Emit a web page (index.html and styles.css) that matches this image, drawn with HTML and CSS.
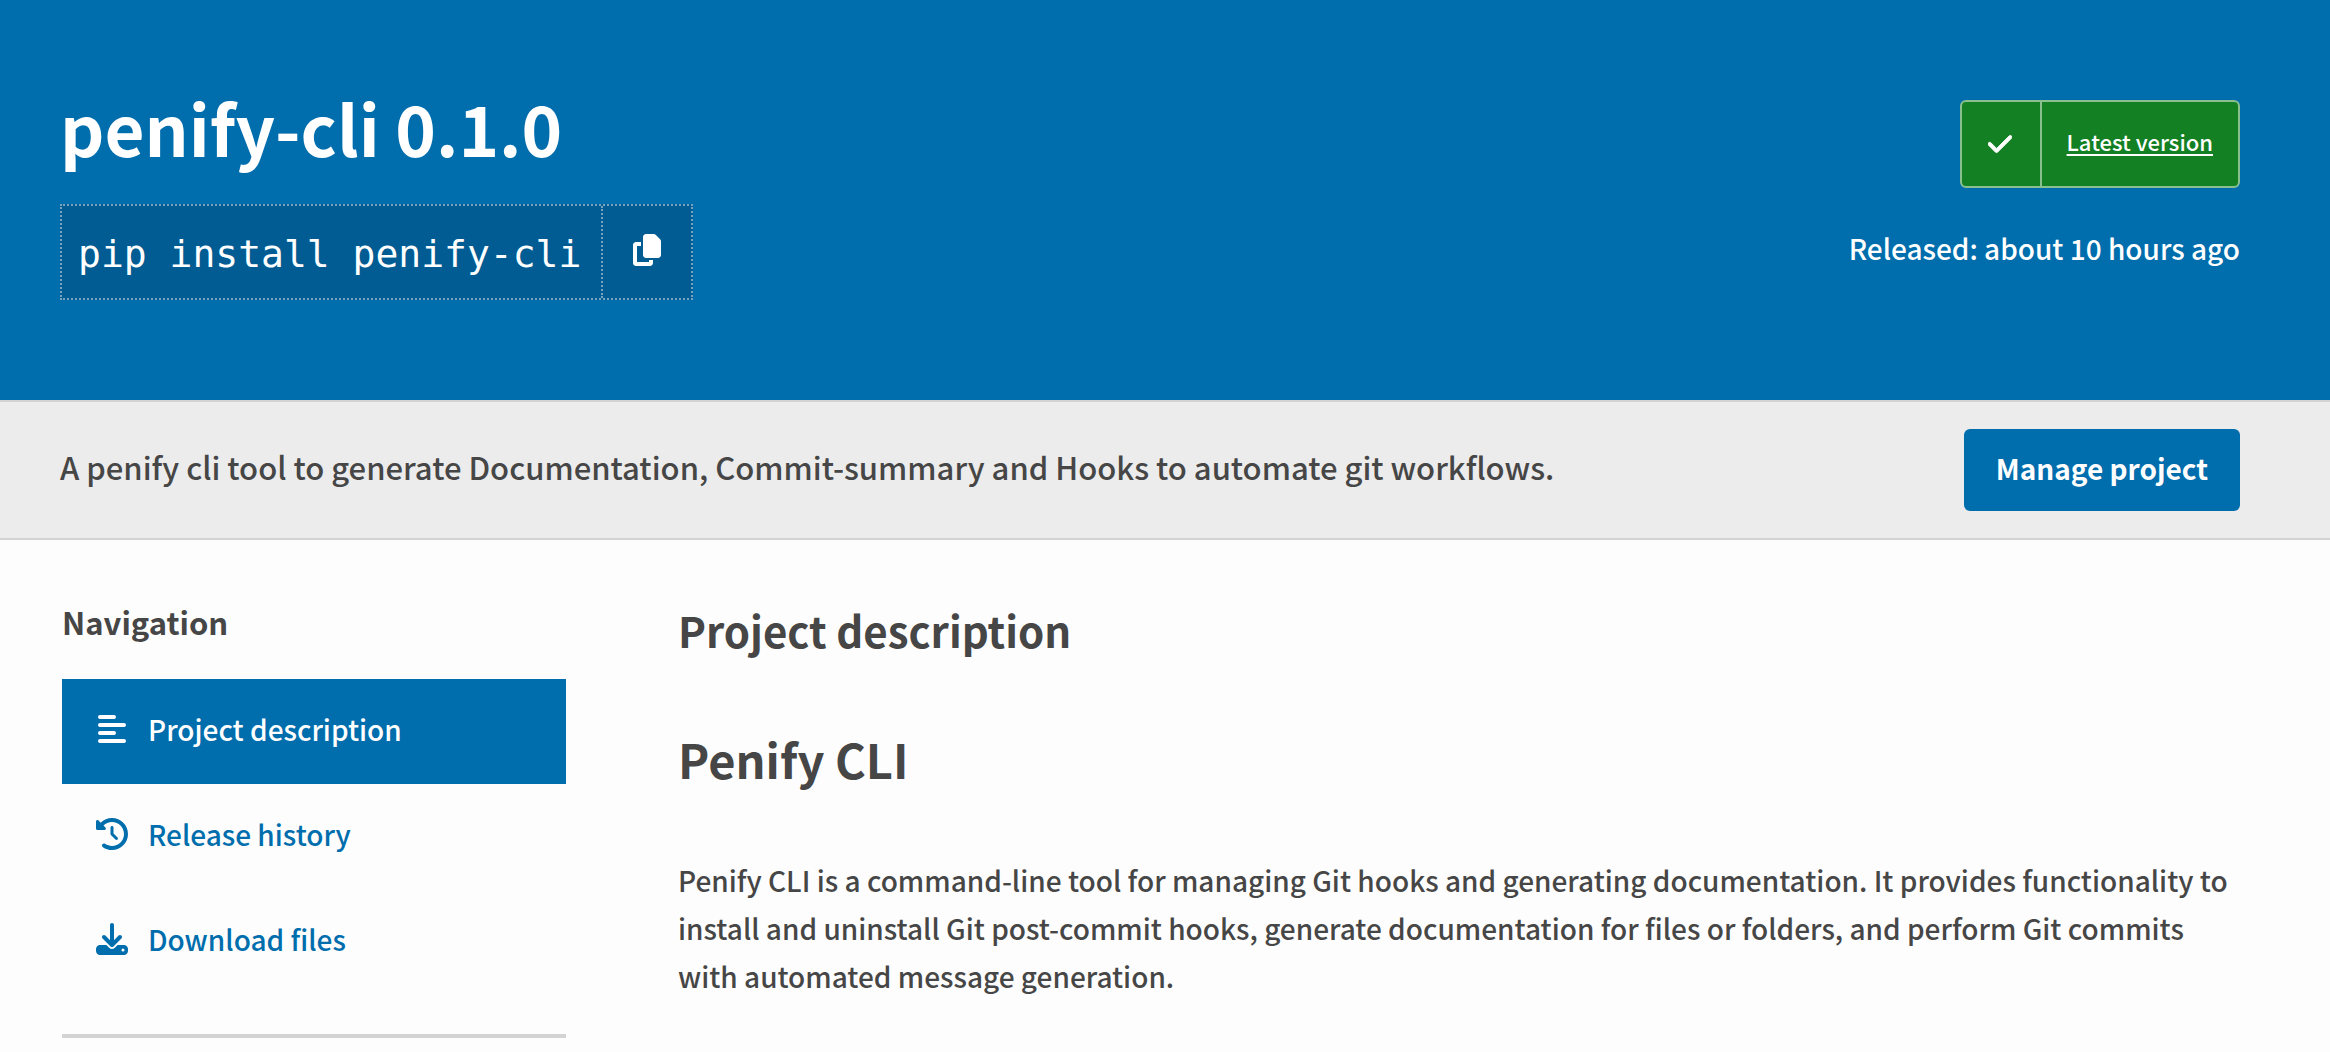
FILE: index.html
```html
<!DOCTYPE html>
<html lang="en">
<head>
<meta charset="utf-8">
<meta name="viewport" content="width=device-width, initial-scale=1">
<title>penify-cli · PyPI</title>
<link rel="stylesheet" href="styles.css">
</head>
<body>
<header class="package-header">
  <div class="package-header-left">
    <h1 class="package-name">penify-cli 0.1.0</h1>
    <div class="pip-command">
      <span class="pip-text">pip install penify-cli</span>
      <button class="copy-button" type="button" aria-label="Copy PIP instructions">
        <svg class="copy-icon" viewBox="0 0 448 512" aria-hidden="true"><path d="M208 0H332.100c12.700 0 24.900 5.100 33.900 14.100l67.900 67.900c9 9 14.100 21.200 14.100 33.900V336c0 26.500-21.500 48-48 48H208c-26.500 0-48-21.500-48-48V48c0-26.500 21.500-48 48-48zM48 128h80v64H64V448H256V416h64v48c0 26.500-21.500 48-48 48H48c-26.500 0-48-21.500-48-48V176c0-26.500 21.500-48 48-48z"/></svg>
      </button>
    </div>
  </div>
  <div class="package-header-right">
    <div class="status-badge">
      <span class="status-icon"><svg viewBox="0 0 448 512" aria-hidden="true"><path d="M438.600 105.400c12.500 12.500 12.500 32.800 0 45.300l-256 256c-12.500 12.500-32.800 12.500-45.300 0l-128-128c-12.500-12.500-12.500-32.800 0-45.300s32.800-12.500 45.300 0L160 338.700 393.400 105.400c12.500-12.500 32.800-12.500 45.300 0z"/></svg></span>
      <a class="status-link" href="#">Latest version</a>
    </div>
    <p class="release-date">Released: about 10 hours ago</p>
  </div>
</header>
<section class="summary-bar">
  <p class="summary">A penify cli tool to generate Documentation, Commit-summary and Hooks to automate git workflows.</p>
  <a class="manage-button" href="#">Manage project</a>
</section>
<div class="content">
  <aside class="sidebar">
    <h2 class="sidebar-title">Navigation</h2>
    <nav class="tabs">
      <a class="tab tab-active" href="#description">
        <svg class="tab-icon" viewBox="0 0 32 32" aria-hidden="true"><path d="M4 2H18a2 2 0 0 1 0 4H4a2 2 0 0 1 0-4zM4 10H28a2 2 0 0 1 0 4H4a2 2 0 0 1 0-4zM4 18H18a2 2 0 0 1 0 4H4a2 2 0 0 1 0-4zM4 26H28a2 2 0 0 1 0 4H4a2 2 0 0 1 0-4z"/></svg>
        Project description</a>
      <a class="tab" href="#history">
        <svg class="tab-icon" viewBox="0 0 512 512" aria-hidden="true"><path d="M75 75L41 41C25.900 25.900 0 36.600 0 57.900V168c0 13.300 10.700 24 24 24H134.100c21.400 0 32.100-25.900 17-41l-30.800-30.800C155 85.500 203 64 256 64c106 0 192 86 192 192s-86 192-192 192c-40.800 0-78.600-12.700-109.700-34.400c-14.500-10.100-34.400-6.600-44.600 7.900s-6.600 34.400 7.900 44.600C151.200 495 201.700 512 256 512c141.400 0 256-114.600 256-256S397.400 0 256 0C185.300 0 121.300 28.700 75 75zm181 53c-13.300 0-24 10.700-24 24V256c0 6.400 2.500 12.500 7 17l72 72c9.400 9.400 24.600 9.400 33.900 0s9.400-24.600 0-33.900l-65-65V152c0-13.300-10.700-24-24-24z"/></svg>
        Release history</a>
      <a class="tab" href="#files">
        <svg class="tab-icon" viewBox="0 0 512 512" aria-hidden="true"><path d="M288 32c0-17.700-14.300-32-32-32s-32 14.300-32 32V274.700l-73.400-73.400c-12.500-12.500-32.800-12.500-45.300 0s-12.500 32.800 0 45.300l128 128c12.500 12.500 32.800 12.500 45.300 0l128-128c12.500-12.500 12.500-32.800 0-45.300s-32.800-12.500-45.300 0L288 274.700V32zM64 352c-35.300 0-64 28.700-64 64v32c0 35.300 28.700 64 64 64H448c35.300 0 64-28.700 64-64V416c0-35.300-28.700-64-64-64H346.500l-45.300 45.300c-25 25-65.500 25-90.500 0L165.500 352H64zm368 56a24 24 0 1 1 0 48 24 24 0 1 1 0-48z"/></svg>
        Download files</a>
    </nav>
  </aside>
  <main class="description" id="description">
    <h2 class="section-title">Project description</h2>
    <h1 class="readme-title">Penify CLI</h1>
    <p class="readme-text">Penify CLI is a command-line tool for managing Git hooks and generating documentation. It provides functionality to install and uninstall Git post-commit hooks, generate documentation for files or folders, and perform Git commits with automated message generation.</p>
  </main>
</div>
</body>
</html>
```
FILE: styles.css
```css
* { box-sizing: border-box; }

body {
  margin: 0;
  background: #fdfdfd;
  color: #464646;
  font-family: "Noto Sans CJK SC", "Open Sans", sans-serif;
  font-size: 28px;
  font-weight: 500;
  line-height: 48px;
}

h1, h2, p { margin: 0; }
svg { display: block; fill: currentColor; }

.package-header {
  display: flex;
  justify-content: space-between;
  min-height: 400px;
  padding: 83px 90px 100px 60px;
  background: #006dad;
  color: #fff;
}

.package-name {
  font-size: 69px;
  font-weight: 600;
  line-height: 88px;
  margin-bottom: 33px;
}

.pip-command {
  display: flex;
  height: 96px;
  border: 2px dotted rgba(255, 255, 255, 0.45);
  background: rgba(0, 0, 0, 0.15);
}

.pip-text {
  padding: 2px 20px 0 16px;
  font: 38px/92px "DejaVu Sans Mono", monospace;
}

.copy-button {
  display: flex;
  align-items: center;
  width: 90px;
  padding: 0 30px 4px;
  border: 0;
  border-left: 2px dotted rgba(255, 255, 255, 0.45);
  background: none;
  color: inherit;
}

.copy-icon { width: 28px; height: 32px; }

.package-header-right {
  display: flex;
  flex-direction: column;
  align-items: flex-end;
  padding-top: 17px;
}

.status-badge {
  display: flex;
  height: 88px;
  border: 2px solid #8abf8f;
  border-radius: 6px;
  background: #148024;
}

.status-icon {
  display: flex;
  align-items: center;
  width: 80px;
  padding: 0 26px;
  border-right: 2px solid #8abf8f;
}

.status-icon svg {
  width: 24px;
  height: 28px;
  stroke: currentColor;
  stroke-width: 16;
}

.status-link {
  padding: 0 25px;
  color: #fff;
  font-size: 22px;
  line-height: 79px;
  text-decoration-thickness: 2px;
  text-underline-offset: 3px;
}

.release-date { margin-top: 36px; }

.summary-bar {
  display: flex;
  align-items: center;
  justify-content: space-between;
  min-height: 140px;
  padding: 0 90px 0 60px;
  border-top: 2px solid #d3d3d3;
  border-bottom: 2px solid #d3d3d3;
  background: #ececec;
}

.summary {
  padding-bottom: 6px;
  font-size: 31px;
}

.manage-button {
  padding: 15px 32px 19px;
  border-radius: 6px;
  background: #006dad;
  color: #fff;
  font-weight: 700;
  text-decoration: none;
}

.content {
  display: grid;
  grid-template-columns: 504px 1fr;
  gap: 112px;
  padding: 58px 90px 14px 62px;
}

.sidebar { border-bottom: 4px solid #d3d3d3; padding-bottom: 40px; }

.sidebar-title {
  font-size: 31px;
  font-weight: 600;
  margin-bottom: 33px;
}

.tab {
  display: flex;
  align-items: center;
  gap: 20px;
  height: 105px;
  padding: 0 34px 5px;
  color: #006dad;
  text-decoration: none;
}

.tab-active { background: #006dad; color: #fff; }
.tab-icon { width: 32px; height: 32px; }

.section-title {
  font-size: 42px;
  font-weight: 600;
  line-height: 64px;
  margin-bottom: 65px;
}

.readme-title {
  font-size: 47px;
  font-weight: 600;
  line-height: 64px;
  margin-bottom: 65px;
}
```
